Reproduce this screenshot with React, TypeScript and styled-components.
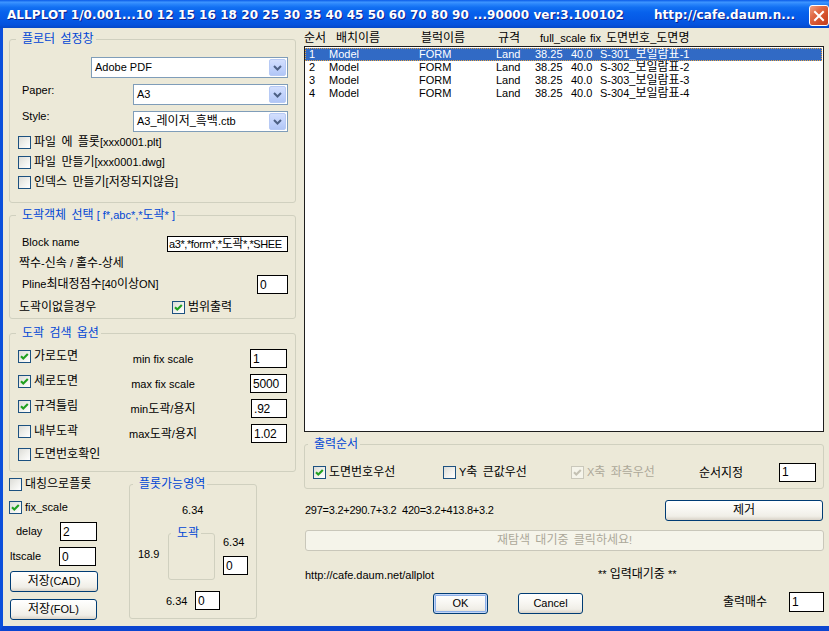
import React from 'react';
import styled, { createGlobalStyle, css } from 'styled-components';

const FONT = `"Liberation Sans", "Noto Sans CJK KR", sans-serif`;

const GlobalStyle = createGlobalStyle`
  html, body { margin: 0; padding: 0; background: #ECE9D8; }
  body { font-family: ${FONT}; font-size: 11px; color: #000; }
  * { box-sizing: border-box; }
`;

// hangul runs are drawn a bit bigger than latin, like Gulim 9pt
const Han = styled.span`
  font-size: 12px;
  word-spacing: 2px;
`;
const H = '\\u1100-\\u11FF\\u3130-\\u318F\\uAC00-\\uD7AF';
const HANGUL = new RegExp(`([${H}]+(?: +[${H}]+)*)`);
const K = ({ children }: { children: string }) => (
  <>{children.split(HANGUL).map((p, i) => (i % 2 ? <Han key={i}>{p}</Han> : p))}</>
);

/* ---------- window chrome ---------- */

const Window = styled.div`
  width: 829px;
  height: 631px;
  display: flex;
  flex-direction: column;
  overflow: hidden;
  background: #ECE9D8;
`;

const TitleBar = styled.div`
  height: 28px;
  flex: none;
  display: flex;
  align-items: center;
  padding: 2px 0 0 7px;
  background: linear-gradient(to bottom, #0A5BE8 0%, #3D95FF 8%, #2B86FB 14%, #1270F2 26%, #0761EC 45%, #0559E6 70%, #0452DD 88%, #0447C8 100%);
  color: #fff;
  font: bold 12px "DejaVu Sans", sans-serif;
  letter-spacing: 0.07px;
  text-shadow: 1px 1px 0 #0F1E8A;
  white-space: nowrap;
`;

const TitleUrl = styled.span`
  margin-left: 30px;
`;

const CloseBtn = styled.div`
  margin-left: auto;
  align-self: flex-start;
  margin-top: 3px;
  width: 20px;
  height: 21px;
  flex: none;
  border: 1px solid #fff;
  border-radius: 3px;
  background: linear-gradient(135deg, #EFA084 0%, #E06A45 35%, #D4502B 65%, #C13C1F 100%);
  display: flex;
  align-items: center;
  justify-content: center;
`;

const Frame = styled.div`
  flex: 1;
  display: grid;
  grid-template-columns: 293px 520px;
  column-gap: 8px;
  border-left: 3px solid #0B4FDB;
  border-bottom: 5px solid #0B45D0;
`;

/* ---------- shared controls ---------- */

const Group = styled.fieldset<{ $mt?: number; $ml?: number; $pb?: number; $w?: number; $h?: number; $pl?: number }>`
  margin: ${p => p.$mt ?? 0}px 0 0 ${p => p.$ml ?? 0}px;
  padding: 0 7px ${p => p.$pb ?? 0}px ${p => p.$pl ?? 8}px;
  border: 1px solid #D0D0BF;
  border-radius: 3px;
  min-width: 0;
  ${p => p.$w && css`width: ${p.$w}px; flex: none;`}
  ${p => p.$h && css`height: ${p.$h}px;`}
`;

const Legend = styled.legend<{ $ml?: number }>`
  margin-left: ${p => p.$ml ?? -2}px;
  padding: 0 2px 0 6px;
  color: #0046D5;
  line-height: 12px;
  height: 12px;
  white-space: nowrap;
`;

const CheckBox = styled.span<{ $disabled?: boolean }>`
  width: 13px;
  height: 13px;
  flex: none;
  display: inline-flex;
  align-items: center;
  justify-content: center;
  border: 1px solid ${p => (p.$disabled ? '#CAC8BB' : '#1C5180')};
  background: ${p => (p.$disabled ? '#F5F4EA' : 'linear-gradient(135deg, #DCDCD7 0%, #EFEFEB 50%, #FFFFFF 100%)')};
`;

const Check = ({ checked, disabled }: { checked?: boolean; disabled?: boolean }) => (
  <CheckBox $disabled={disabled}>
    {checked && (
      <svg width="11" height="11" viewBox="0 0 11 11">
        <path d="M2 5.2 L4.3 7.6 L8.8 3" fill="none" stroke={disabled ? '#C4C1B3' : '#21A121'} strokeWidth="2.1" />
      </svg>
    )}
  </CheckBox>
);

const CheckLine = styled.div<{ $h?: number; $mt?: number; $w?: number; $disabled?: boolean }>`
  display: flex;
  align-items: center;
  gap: 3px;
  height: ${p => p.$h ?? 20}px;
  margin-top: ${p => p.$mt ?? 0}px;
  line-height: 13px;
  white-space: nowrap;
  ${p => p.$w && css`width: ${p.$w}px; flex: none;`}
  color: ${p => (p.$disabled ? '#ACA899' : '#000')};
`;

const TextBox = styled.div<{ $w: number; $h?: number; $small?: boolean }>`
  width: ${p => p.$w}px;
  height: ${p => p.$h ?? 19}px;
  flex: none;
  border: 1px solid #000;
  background: #fff;
  padding-left: ${p => (p.$small ? 1 : 2)}px;
  display: flex;
  align-items: center;
  overflow: hidden;
  white-space: nowrap;
  font-size: ${p => (p.$small ? 11 : 12)}px;
  line-height: 14px;
  letter-spacing: ${p => (p.$small ? -0.4 : -0.2)}px;
`;

const ComboBox = styled.div<{ $w: number }>`
  width: ${p => p.$w}px;
  height: 21px;
  flex: none;
  border: 1px solid #7F9DB9;
  background: #fff;
  display: flex;
  align-items: center;
  padding-left: 3px;
  line-height: 13px;
`;

const ComboText = styled.span`
  flex: 1;
  white-space: nowrap;
`;

const DropButton = styled.span`
  width: 17px;
  height: 17px;
  margin-right: 1px;
  border: 1px solid #B7CAF5;
  border-radius: 2px;
  background: linear-gradient(to bottom, #D3DFFD 0%, #C2D3FC 50%, #B1C6F6 100%);
  display: flex;
  align-items: center;
  justify-content: center;
`;

const Combo = ({ w, value }: { w: number; value: string }) => (
  <ComboBox $w={w}>
    <ComboText><K>{value}</K></ComboText>
    <DropButton>
      <svg width="9" height="6" viewBox="0 0 9 6">
        <path d="M1 1 L4.5 4.5 L8 1" fill="none" stroke="#4D6185" strokeWidth="2" />
      </svg>
    </DropButton>
  </ComboBox>
);

const XPButton = styled.button<{ $w: number; $default?: boolean; $ml?: number; $mt?: number }>`
  width: ${p => p.$w}px;
  height: 21px;
  flex: none;
  padding: 0;
  margin: ${p => p.$mt ?? 0}px 0 0 ${p => p.$ml ?? 0}px;
  border: 1px solid #003C74;
  border-radius: 3px;
  background: linear-gradient(to bottom, #FFFFFF 0%, #F9F8F4 40%, #F0EEE7 80%, #D9D3C8 100%);
  box-shadow: ${p => (p.$default ? 'inset 0 0 0 1px #C4D6F8, inset 0 0 0 2px #8DB0E8' : 'none')};
  font: 11px ${FONT};
  color: #000;
  line-height: 17px;
`;

const Label = styled.div<{ $pl?: number; $mt?: number; $w?: number; $center?: boolean }>`
  padding-left: ${p => p.$pl ?? 0}px;
  margin-top: ${p => p.$mt ?? 0}px;
  line-height: 13px;
  white-space: nowrap;
  ${p => p.$w && css`width: ${p.$w}px; flex: none;`}
  ${p => p.$center && css`text-align: center;`}
`;

/* ---------- left column ---------- */

const LeftCol = styled.div`
  padding-left: 6px;
  display: flex;
  flex-direction: column;
`;

const Line = styled.div<{ $mt?: number; $h?: number; $align?: string }>`
  display: flex;
  align-items: ${p => p.$align ?? 'flex-start'};
  margin-top: ${p => p.$mt ?? 0}px;
  ${p => p.$h && css`height: ${p.$h}px;`}
`;

const Spacer = styled.div`
  flex: 1;
`;

const OptionGrid = styled.div`
  margin-top: 10px;
  display: grid;
  grid-template-columns: 110px 70px 1fr;
  grid-template-rows: repeat(4, 25px) 20px;
`;

const OptionCheck = styled(CheckLine)`
  height: 13px;
  align-self: start;
`;

const ScaleInput = styled.div`
  justify-self: end;
  margin-right: 1px;
`;

const BottomArea = styled.div`
  display: flex;
  align-items: flex-start;
`;

const SideControls = styled.div`
  width: 89px;
  flex: none;
  display: flex;
  flex-direction: column;
`;

const PlotValue = styled.div<{ $ml?: number; $mt?: number; $w?: number }>`
  margin: ${p => p.$mt ?? 0}px 0 0 ${p => p.$ml ?? 0}px;
  line-height: 14px;
  ${p => p.$w && css`width: ${p.$w}px; flex: none;`}
`;

const PlotStack = styled.div`
  margin-left: 8px;
  display: flex;
  flex-direction: column;
`;

/* ---------- right column ---------- */

const RightCol = styled.div`
  display: flex;
  flex-direction: column;
`;

const ListHeader = styled.div`
  height: 18px;
  padding-top: 4px;
  line-height: 13px;
  display: grid;
  grid-template-columns: 32px 85px 77px 42px 50px 16px 1fr;
  white-space: nowrap;
`;

const ListBox = styled.div`
  height: 386px;
  border: 1px solid #1E1E1E;
  background: #fff;
  padding-top: 1px;
`;

const ListRow = styled.div<{ $sel?: boolean }>`
  height: 13px;
  line-height: 13px;
  padding-left: 4px;
  display: grid;
  grid-template-columns: 20px 90px 77px 39px 36px 29px 1fr;
  white-space: nowrap;
  ${p =>
    p.$sel &&
    css`
      background: #316AC5;
      color: #fff;
      outline: 1px dotted #E9A440;
      outline-offset: -1px;
      margin-right: 1px;
    `}
`;

const FormulaRow = styled.div`
  margin-top: 11px;
  height: 20px;
  display: flex;
  align-items: center;
  justify-content: space-between;
  padding-left: 1px;
  white-space: pre;
  letter-spacing: -0.25px;
`;

const WaitBar = styled.div`
  margin: 10px 0 0 1px;
  width: 519px;
  height: 21px;
  border: 1px solid #C9C7BA;
  border-radius: 3px;
  background: #F5F4EA;
  color: #ACA899;
  display: flex;
  align-items: center;
  justify-content: center;
  line-height: 13px;
`;

const InfoRow = styled.div`
  margin-top: 16px;
  display: flex;
  line-height: 14px;
  white-space: nowrap;
`;

const InfoLink = styled.div`
  width: 294px;
  flex: none;
  padding-left: 1px;
  padding-top: 1px;
`;

const ButtonRow = styled.div`
  margin-top: 10px;
  display: flex;
  align-items: flex-start;
`;

const drawings = [1, 2, 3, 4];

export default function App() {
  return (
    <>
      <GlobalStyle />
      <Window>
        <TitleBar>
          <span>ALLPLOT 1/0.001...10 12 15 16 18 20 25 30 35 40 45 50 60 70 80 90 ...90000 ver:3.100102</span>
          <TitleUrl>http://cafe.daum.n...</TitleUrl>
          <CloseBtn>
            <svg width="12" height="12" viewBox="0 0 12 12">
              <path d="M2 2 L10 10 M10 2 L2 10" stroke="#fff" strokeWidth="2" strokeLinecap="square" />
            </svg>
          </CloseBtn>
        </TitleBar>

        <Frame>
          <LeftCol>
            <Group $mt={5} $pb={10}>
              <Legend><K>플로터 설정창</K></Legend>
              <Line $mt={12}>
                <Spacer />
                <Combo w={197} value="Adobe PDF" />
              </Line>
              <Line $mt={6}>
                <Label $pl={4}>Paper:</Label>
                <Spacer />
                <Combo w={155} value="A3" />
              </Line>
              <Line $mt={6}>
                <Label $pl={4} $mt={-1}>Style:</Label>
                <Spacer />
                <Combo w={155} value="A3_레이저_흑백.ctb" />
              </Line>
              <CheckLine><Check /><span><K>파일 에 플롯[xxx0001.plt]</K></span></CheckLine>
              <CheckLine><Check /><span><K>파일 만들기[xxx0001.dwg]</K></span></CheckLine>
              <CheckLine><Check /><span><K>인덱스 만들기[저장되지않음]</K></span></CheckLine>
            </Group>

            <Group $mt={6} $pb={4}>
              <Legend><K>도곽객체 선택 [ f*,abc*,*도곽* ]</K></Legend>
              <Line $mt={15}>
                <Label $pl={4}>Block name</Label>
                <Spacer />
                <TextBox $w={121} $h={16} $small><K>a3*,*form*,*도곽*,*SHEE</K></TextBox>
              </Line>
              <Label $pl={1} $mt={5}><K>짝수-신속 / 홀수-상세</K></Label>
              <Line $mt={5}>
                <Label $pl={4} $mt={3}><K>Pline최대정점수[40이상ON]</K></Label>
                <Spacer />
                <TextBox $w={31}>0</TextBox>
              </Line>
              <Line $mt={6} $h={14} $align="center">
                <Label $pl={1} $w={154}><K>도곽이없을경우</K></Label>
                <CheckLine $h={14} $mt={0}><Check checked /><span><K>범위출력</K></span></CheckLine>
              </Line>
            </Group>

            <Group $mt={8} $pb={2}>
              <Legend><K>도곽 검색 옵션</K></Legend>
              <OptionGrid>
                <OptionCheck $mt={1}><Check checked /><span><K>가로도면</K></span></OptionCheck>
                <Label $center $mt={4}>min fix scale</Label>
                <ScaleInput><TextBox $w={37}>1</TextBox></ScaleInput>

                <OptionCheck $mt={1}><Check checked /><span><K>세로도면</K></span></OptionCheck>
                <Label $center $mt={4}>max fix scale</Label>
                <ScaleInput><TextBox $w={37}>5000</TextBox></ScaleInput>

                <OptionCheck $mt={1}><Check checked /><span><K>규격틀림</K></span></OptionCheck>
                <Label $center $mt={4}><K>min도곽/용지</K></Label>
                <ScaleInput><TextBox $w={36}>.92</TextBox></ScaleInput>

                <OptionCheck $mt={1}><Check /><span><K>내부도곽</K></span></OptionCheck>
                <Label $center $mt={4}><K>max도곽/용지</K></Label>
                <ScaleInput><TextBox $w={36}>1.02</TextBox></ScaleInput>

                <OptionCheck $mt={-1}><Check /><span><K>도면번호확인</K></span></OptionCheck>
              </OptionGrid>
            </Group>

            <BottomArea>
              <SideControls>
                <CheckLine $h={23} $mt={1}><Check /><span><K>대칭으로플롯</K></span></CheckLine>
                <CheckLine $h={23}><Check checked /><span>fix_scale</span></CheckLine>
                <Line $mt={3} $align="center">
                  <Label $pl={7} $w={51}>delay</Label>
                  <TextBox $w={37}>2</TextBox>
                </Line>
                <Line $mt={6} $align="center">
                  <Label $pl={1} $w={50}>ltscale</Label>
                  <TextBox $w={37}>0</TextBox>
                </Line>
                <XPButton $w={88} $ml={1} $mt={5}><K>저장(CAD)</K></XPButton>
                <XPButton $w={87} $ml={1} $mt={7}><K>저장(FOL)</K></XPButton>
              </SideControls>

              <Group $mt={6} $ml={31} $w={128} $h={141} $pl={0}>
                <Legend $ml={3}><K>플롯가능영역</K></Legend>
                <PlotValue $ml={52} $mt={13}>6.34</PlotValue>
                <Line $mt={10}>
                  <PlotValue $ml={8} $mt={20} $w={30}>18.9</PlotValue>
                  <Group $w={47} $h={53} $pl={0}>
                    <Legend $ml={2}><K>도곽</K></Legend>
                  </Group>
                  <PlotStack>
                    <PlotValue $mt={8}>6.34</PlotValue>
                    <PlotValue $mt={7}><TextBox $w={25}>0</TextBox></PlotValue>
                  </PlotStack>
                </Line>
                <Line $mt={11} $align="center">
                  <PlotValue $ml={36} $w={29}>6.34</PlotValue>
                  <TextBox $w={25}>0</TextBox>
                </Line>
              </Group>
            </BottomArea>
          </LeftCol>

          <RightCol>
            <ListHeader>
              <span><K>순서</K></span>
              <span><K>배치이름</K></span>
              <span><K>블럭이름</K></span>
              <span><K>규격</K></span>
              <span>full_scale</span>
              <span>fix</span>
              <span><K>도면번호_도면명</K></span>
            </ListHeader>
            <ListBox>
              {drawings.map(n => (
                <ListRow key={n} $sel={n === 1}>
                  <span>{n}</span>
                  <span>Model</span>
                  <span>FORM</span>
                  <span>Land</span>
                  <span>38.25</span>
                  <span>40.0</span>
                  <span><K>{`S-30${n}_보일람표-${n}`}</K></span>
                </ListRow>
              ))}
            </ListBox>

            <Group $mt={6} $pb={5}>
              <Legend $ml={-5}><K>출력순서</K></Legend>
              <Line $mt={11} $h={22} $align="center">
                <CheckLine $w={130} $h={22}><Check checked /><span><K>도면번호우선</K></span></CheckLine>
                <CheckLine $w={128} $h={22}><Check /><span><K>Y축 큰값우선</K></span></CheckLine>
                <CheckLine $w={128} $h={22} $disabled><Check checked disabled /><span><K>X축 좌측우선</K></span></CheckLine>
                <Label $w={80} $mt={2}><K>순서지정</K></Label>
                <TextBox $w={37}>1</TextBox>
              </Line>
            </Group>

            <FormulaRow>
              <span>297=3.2+290.7+3.2  420=3.2+413.8+3.2</span>
              <XPButton $w={158} style={{ marginRight: 1 }}><K>제거</K></XPButton>
            </FormulaRow>

            <WaitBar><K>재탐색 대기중 클릭하세요!</K></WaitBar>

            <InfoRow>
              <InfoLink>http://cafe.daum.net/allplot</InfoLink>
              <span><K>** 입력대기중 **</K></span>
            </InfoRow>

            <ButtonRow>
              <XPButton $w={55} $ml={129} $mt={1} $default>OK</XPButton>
              <XPButton $w={65} $ml={30} $mt={1}>Cancel</XPButton>
              <Label $w={66} $mt={4} style={{ marginLeft: 140 }}><K>출력매수</K></Label>
              <TextBox $w={35} $h={20}>1</TextBox>
            </ButtonRow>
          </RightCol>
        </Frame>
      </Window>
    </>
  );
}
